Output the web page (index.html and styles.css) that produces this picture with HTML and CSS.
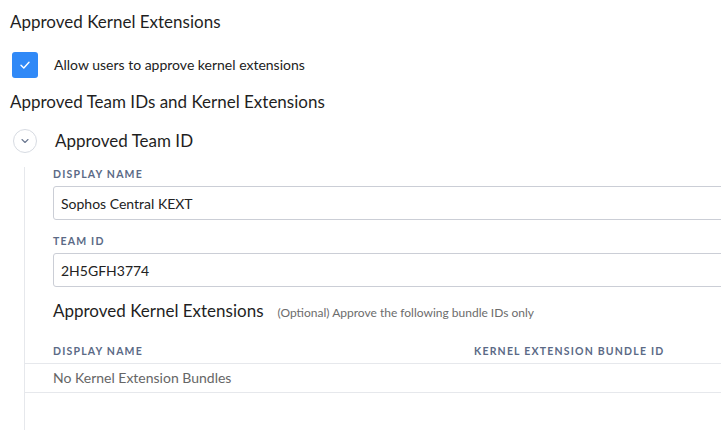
FILE: index.html
```html
<!DOCTYPE html>
<html>
<head>
<meta charset="utf-8">
<link rel="stylesheet" href="styles.css">
</head>
<body>
<div class="page">
  <h2 class="section-title">Approved Kernel Extensions</h2>
  <label class="check-row">
    <span class="checkbox">
      <svg width="12" height="10" viewBox="0 0 12 10"><path d="M2 5.2 L4.8 8 L10 2.2" fill="none" stroke="#fff" stroke-width="1.4" stroke-linecap="round" stroke-linejoin="round"/></svg>
    </span>
    <span class="check-label">Allow users to approve kernel extensions</span>
  </label>
  <h2 class="section-title second">Approved Team IDs and Kernel Extensions</h2>

  <div class="group-head">
    <span class="toggle">
      <svg width="8" height="6" viewBox="0 0 8 6"><path d="M1 1.5 L4 4.5 L7 1.5" fill="none" stroke="#6b7890" stroke-width="1.1" stroke-linecap="round" stroke-linejoin="round"/></svg>
    </span>
    <span class="group-title">Approved Team ID</span>
  </div>

  <div class="group-body">
    <div class="field">
      <div class="field-label">DISPLAY NAME</div>
      <div class="input">Sophos Central KEXT</div>
    </div>
    <div class="field">
      <div class="field-label">TEAM ID</div>
      <div class="input">2H5GFH3774</div>
    </div>
    <div class="sub-head">
      <span class="sub-title">Approved Kernel Extensions</span>
      <span class="sub-note">(Optional) Approve the following bundle IDs only</span>
    </div>
    <div class="table">
      <div class="thead">
        <span class="col-name">DISPLAY NAME</span>
        <span class="col-id">KERNEL EXTENSION BUNDLE ID</span>
      </div>
      <div class="trow empty">No Kernel Extension Bundles</div>
    </div>
  </div>
</div>
</body>
</html>
```
FILE: styles.css
```css
html, body {
  margin: 0;
  padding: 0;
  background: #fff;
  overflow: hidden;
}
body {
  font-family: "Lato", "Open Sans", sans-serif;
  color: #222;
  width: 721px;
  height: 443px;
}
.page {
  padding: 12px 0 0 10px;
  width: 760px;
}
.section-title {
  margin: 0;
  font-size: 17px;
  font-weight: 400;
  line-height: 20px;
  color: #1f1f1f;
}
.section-title.second {
  margin-top: 14px;
}
.check-row {
  display: flex;
  align-items: center;
  margin-top: 20px;
  padding-left: 2px;
}
.checkbox {
  width: 26px;
  height: 26px;
  border-radius: 3px;
  background: #3089f7;
  display: flex;
  align-items: center;
  justify-content: center;
}
.check-label {
  margin-left: 16px;
  font-size: 14px;
  line-height: 18px;
  color: #222;
}
.group-head {
  display: flex;
  align-items: center;
  margin-top: 17px;
  padding-left: 3px;
  height: 24px;
}
.toggle {
  width: 22px;
  height: 22px;
  border: 1px solid #d7dbe2;
  border-radius: 50%;
  display: flex;
  align-items: center;
  justify-content: center;
}
.group-title {
  margin-left: 18px;
  font-size: 17px;
  line-height: 22px;
  color: #1f1f1f;
}
.group-body {
  margin-left: 14px;
  margin-top: 14px;
  border-left: 1px solid #e6e8ec;
  padding-left: 28px;
  padding-bottom: 37px;
}
.field {
  padding-top: 1px;
}
.field + .field {
  margin-top: 15px;
  padding-top: 0;
}
.field-label {
  font-size: 10.5px;
  font-weight: 700;
  letter-spacing: 1.2px;
  color: #5b6a86;
  line-height: 12px;
}
.input {
  margin-top: 6px;
  height: 32px;
  border: 1px solid #cbced6;
  border-radius: 3px;
  padding: 0 7px;
  display: flex;
  align-items: center;
  font-size: 14px;
  color: #222;
}
.sub-head {
  display: flex;
  align-items: baseline;
  margin-top: 14px;
  line-height: 20px;
}
.sub-title {
  font-size: 17px;
  color: #1f1f1f;
}
.sub-note {
  margin-left: 14px;
  font-size: 12px;
  color: #6c6c6c;
}
.table {
  margin-top: 22px;
  margin-left: -29px;
}
.thead {
  display: flex;
  padding-left: 29px;
  padding-bottom: 6px;
  border-bottom: 1px solid #e6e8ec;
  font-size: 10.5px;
  font-weight: 700;
  letter-spacing: 1.2px;
  color: #5b6a86;
  line-height: 12px;
}
.col-name {
  width: 421px;
}
.trow {
  padding-left: 29px;
  padding-bottom: 2px;
  box-sizing: border-box;
  height: 29px;
  display: flex;
  align-items: center;
  border-bottom: 1px solid #e6e8ec;
  font-size: 14px;
  color: #666;
}
```
